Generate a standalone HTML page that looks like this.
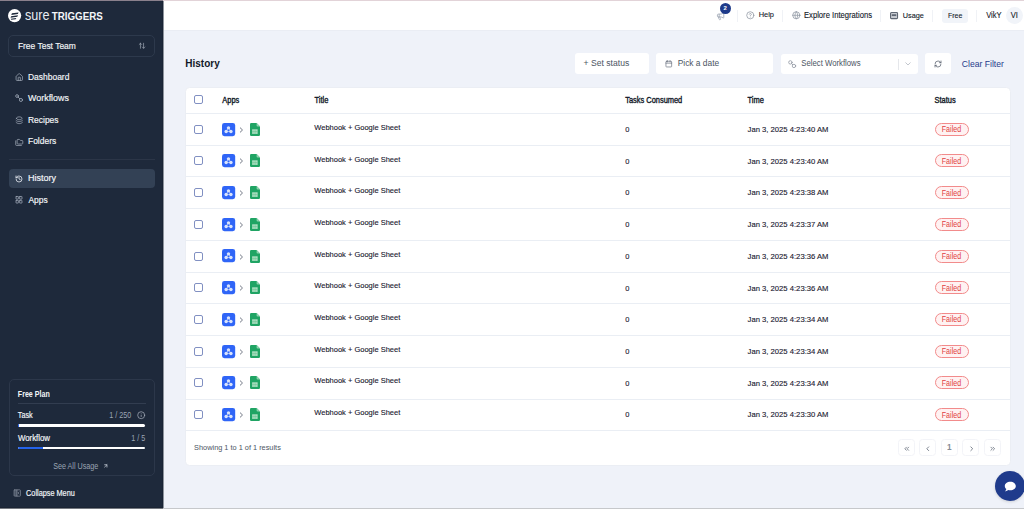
<!DOCTYPE html>
<html><head><meta charset="utf-8">
<style>
*{box-sizing:border-box;margin:0;padding:0}
html,body{width:1024px;height:509px;overflow:hidden;background:#eff2f9;font-family:"Liberation Sans",sans-serif;position:relative}
.a{position:absolute}
.t{position:absolute;white-space:nowrap;line-height:1;transform-origin:0 0}
.nav{color:#f3f5f8;font-size:8.46px;-webkit-text-stroke:0.15px #f3f5f8}
.ic{position:absolute;overflow:visible}
.sl{fill:none;stroke-linecap:round;stroke-linejoin:round}
.hr{position:absolute;left:185.5px;width:824.5px;height:1px;background:#eaeef4}
.cb{position:absolute;width:9px;height:9px;border:1.1px solid #8190c2;border-radius:2px;background:#fff}
.th{font-size:7px;font-weight:700;color:#111827}
.td{font-size:7.5px;color:#1f2937}
.fail{position:absolute;width:34px;height:13px;border:1px solid #f28b8b;background:#fff2f2;border-radius:7px}
.box{position:absolute;background:#fff;border-radius:3px}
.pg{position:absolute;width:17px;height:17px;border:1px solid #f3f4f8;border-radius:3.5px}
.sep{position:absolute;width:1px;background:#eceff4}
</style></head><body>
<div class="a" style="left:0;top:1px;width:163px;height:507px;background:#1e293b"></div>
<div class="a" style="left:162px;top:1px;width:1px;height:507px;background:#1a2435"></div>
<div class="a" style="left:163px;top:1px;width:1px;height:507px;background:#8d939c"></div>
<div class="a" style="left:164px;top:1px;width:860px;height:29px;background:#fff"></div>
<div class="a" style="left:164px;top:30px;width:860px;height:1px;background:#eaedf4"></div>
<div class="a" style="left:0;top:0;width:1024px;height:1px;background:#e2d3d8"></div>
<div class="a" style="left:0;top:0;width:163px;height:1px;background:#8a808c"></div>
<svg class="ic" style="left:8.3px;top:8.8px;" width="13.2" height="13.2" viewBox="0 0 14 14"><circle cx="7" cy="7" r="7" fill="#fff"/><path d="M4.2 4.6 L11.2 3.6 L10.5 5.3 L3.5 6.3 Z M3.3 7.6 L10.6 6.6 L9.9 8.3 L2.7 9.3 Z" fill="#1e293b"/><path d="M3 10.3 L8.8 9.5 L8.2 10.9 L3.4 11.5Z" fill="#1e293b"/></svg>
<div class="t" style="left:25px;top:8.9px;font-size:12.6px;color:#e9edf2;font-weight:400;transform:scale(1.0,1.1);">sure</div>
<div class="t" style="left:51.7px;top:10.9px;font-size:9.8px;color:#f4f6f9;font-weight:700;transform:scale(1.0,1.18);">TRIGGERS</div>
<div class="a" style="left:8px;top:35px;width:147px;height:21.5px;border:1px solid #2d394c;border-radius:5px"></div>
<div class="t nav" style="left:17.9px;top:40.8px;font-size:8.46px;color:#f3f5f8;font-weight:400;transform:scale(1.0,1.13);">Free Test Team</div>
<svg class="ic" style="left:137.5px;top:42px;" width="8" height="7.5" viewBox="0 0 24 24"><g class="sl" stroke="#aeb6c2" stroke-width="2.0"><path d="M3 8l4-4 4 4"/><path d="M7 4v16"/><path d="M21 16l-4 4-4-4"/><path d="M17 20V4"/></g></svg>
<svg class="ic" style="left:15.2px;top:72.5px;" width="8.5" height="8.5" viewBox="0 0 24 24"><g class="sl" stroke="#9aa3b2" stroke-width="2.2"><path d="M15 21v-8a1 1 0 0 0-1-1h-4a1 1 0 0 0-1 1v8"/><path d="M3 10a2 2 0 0 1 .709-1.528l7-5.999a2 2 0 0 1 2.582 0l7 5.999A2 2 0 0 1 21 10v9a2 2 0 0 1-2 2H5a2 2 0 0 1-2-2z"/></g></svg>
<svg class="ic" style="left:15.3px;top:94.2px;" width="8.5" height="8.5" viewBox="0 0 24 24"><g class="sl" stroke="#9aa3b2" stroke-width="2.4"><circle cx="5.8" cy="5.8" r="3.9"/><circle cx="16.8" cy="16.8" r="4.4"/><path d="M8.6 8.6l4.9 4.9"/></g></svg>
<svg class="ic" style="left:15.3px;top:115.8px;" width="8.5" height="8.5" viewBox="0 0 24 24"><g class="sl" stroke="#9aa3b2" stroke-width="2.3"><path d="M4 6.5C4 4 8 2.5 12 2.5s8 1.5 8 4-4 4-8 4-8-1.5-8-4z"/><path d="M3 12.5c2 2 5 3 9 3s7-1 9-3"/><path d="M3 18c2 2 5 3.5 9 3.5s7-1.5 9-3.5"/></g></svg>
<svg class="ic" style="left:15px;top:137.5px;" width="8.5" height="8.5" viewBox="0 0 24 24"><g class="sl" stroke="#9aa3b2" stroke-width="2.2"><path d="M20 17a2 2 0 0 0 2-2V9a2 2 0 0 0-2-2h-3.9a2 2 0 0 1-1.69-.9l-.81-1.2a2 2 0 0 0-1.67-.9H8a2 2 0 0 0-2 2v9a2 2 0 0 0 2 2Z"/><path d="M2 8v11a2 2 0 0 0 2 2h14"/></g></svg>
<div class="t nav" style="left:28px;top:71.6px;font-size:8.46px;color:#f3f5f8;font-weight:400;transform:scale(1.0,1.13);">Dashboard</div>
<div class="t nav" style="left:28px;top:93.1px;font-size:8.46px;color:#f3f5f8;font-weight:400;transform:scale(1.055,1.13);">Workflows</div>
<div class="t nav" style="left:28px;top:114.6px;font-size:8.46px;color:#f3f5f8;font-weight:400;transform:scale(1.0,1.13);">Recipes</div>
<div class="t nav" style="left:28px;top:136.1px;font-size:8.46px;color:#f3f5f8;font-weight:400;transform:scale(1.0,1.13);">Folders</div>
<div class="a" style="left:9px;top:159px;width:146px;height:1px;background:#2b3547"></div>
<div class="a" style="left:9px;top:169px;width:146px;height:19px;background:#334155;border-radius:4px"></div>
<svg class="ic" style="left:15.3px;top:174.5px;" width="8" height="8" viewBox="0 0 24 24"><g class="sl" stroke="#e8ecf2" stroke-width="2.4"><path d="M3 12a9 9 0 1 0 9-9 9.75 9.75 0 0 0-6.74 2.74L3 8"/><path d="M3 3v5h5"/><path d="M12 7v5l4 2"/></g></svg>
<div class="t nav" style="left:28.4px;top:173.3px;font-size:8.46px;color:#f6f8fb;font-weight:400;transform:scale(1.07,1.13);">History</div>
<svg class="ic" style="left:15.3px;top:196.3px;" width="8" height="7.5" viewBox="0 0 24 24"><g class="sl" stroke="#9aa3b2" stroke-width="2.6"><rect width="7.5" height="8.5" x="2.5" y="1.5" rx="0.8"/><rect width="7.5" height="8.5" x="14" y="1.5" rx="0.8"/><rect width="7.5" height="8.5" x="14" y="14" rx="0.8"/><rect width="7.5" height="8.5" x="2.5" y="14" rx="0.8"/></g></svg>
<div class="t nav" style="left:28.4px;top:195.0px;font-size:8.46px;color:#f3f5f8;font-weight:400;transform:scale(1.0,1.13);">Apps</div>
<div class="a" style="left:8.7px;top:379px;width:146px;height:97px;border:1px solid #2c374a;border-radius:5px"></div>
<div class="t" style="left:17.8px;top:390.5px;font-size:7.1px;color:#f3f5f8;font-weight:700;transform:scale(1.0,1.2);">Free Plan</div>
<div class="a" style="left:17.8px;top:403px;width:128px;height:1px;background:#323d50"></div>
<div class="t" style="left:17.8px;top:410.9px;font-size:7.2px;color:#f3f5f8;font-weight:400;transform:scale(1.0,1.15);-webkit-text-stroke:0.15px #f3f5f8">Task</div>
<div class="t" style="left:109.2px;top:410.9px;font-size:7.2px;color:#9aa4b3;font-weight:400;transform:scale(1.0,1.15);">1 / 250</div>
<svg class="ic" style="left:136.7px;top:410.8px;" width="8.4" height="8.4" viewBox="0 0 24 24"><g class="sl" stroke="#aab2bf" stroke-width="2"><circle cx="12" cy="12" r="10"/><path d="M12 16v-4"/><path d="M12 8h.01"/></g></svg>
<div class="a" style="left:17.8px;top:424px;width:127.7px;height:2.5px;background:#fff;border-radius:1.5px"></div>
<div class="a" style="left:17.8px;top:424px;width:1.5px;height:2.5px;background:#2563eb;border-radius:1.5px"></div>
<div class="t" style="left:17.9px;top:434.6px;font-size:7.85px;color:#f3f5f8;font-weight:400;transform:scale(1.0,1.06);-webkit-text-stroke:0.15px #f3f5f8">Workflow</div>
<div class="t" style="left:131.2px;top:434.2px;font-size:7.2px;color:#9aa4b3;font-weight:400;transform:scale(1.0,1.15);">1 / 5</div>
<div class="a" style="left:17.8px;top:446.5px;width:127.7px;height:2.5px;background:#fff;border-radius:1.5px"></div>
<div class="a" style="left:17.8px;top:446.5px;width:25.6px;height:2.5px;background:#2563eb;border-radius:1.5px 0 0 1.5px"></div>
<div class="t" style="left:53.2px;top:461.9px;font-size:7.2px;color:#9aa4b3;font-weight:400;transform:scale(1.0,1.15);">See All Usage</div>
<svg class="ic" style="left:103.4px;top:463.2px;" width="5.6" height="5.8" viewBox="0 0 24 24"><g class="sl" stroke="#c0c7d1" stroke-width="3.4"><path d="M7 7h10v10"/><path d="M7 17 17 7"/></g></svg>
<svg class="ic" style="left:12.9px;top:489.4px;" width="8.5" height="8" viewBox="0 0 24 24"><rect width="9" height="18" x="3" y="3" fill="#4b5566"/><g class="sl" stroke="#7d8696" stroke-width="2.4"><rect width="19" height="19" x="2.5" y="2.5" rx="2"/><path d="M11 3v18"/><path d="m17 15-3-3 3-3"/></g></svg>
<div class="t" style="left:26.1px;top:488.7px;font-size:7.3px;color:#f3f5f8;font-weight:400;transform:scale(1.0,1.15);-webkit-text-stroke:0.15px #f3f5f8">Collapse Menu</div>
<svg class="ic" style="left:715.5px;top:11.8px;" width="9.2" height="8.5" viewBox="0 0 24 24"><g class="sl" stroke="#9ea6b4" stroke-width="2.3"><path d="M11 6a13 13 0 0 0 8.4-2.8A1 1 0 0 1 21 4v12a1 1 0 0 1-1.6.8A13 13 0 0 0 11 14H5a2 2 0 0 1-2-2V8a2 2 0 0 1 2-2z"/><path d="M6 14a12 12 0 0 0 2.4 7.2 2 2 0 0 0 3.2-2.4A8 8 0 0 1 10 14"/><path d="M8 6v8"/></g></svg>
<div class="a" style="left:720px;top:3px;width:11px;height:11px;border-radius:50%;background:#1e3a8a"></div>
<div class="t" style="left:723.6px;top:5.3px;font-size:6px;color:#fff;font-weight:700;">2</div>
<div class="a" style="left:737px;top:9.5px;width:1px;height:12px;background:#f0f2f6"></div>
<svg class="ic" style="left:745.8px;top:11.2px;" width="8.6" height="8.6" viewBox="0 0 24 24"><g class="sl" stroke="#8d95a2" stroke-width="2.1"><circle cx="12" cy="12" r="10"/><path d="M9.09 9a3 3 0 0 1 5.83 1c0 2-3 3-3 3"/><path d="M12 17h.01"/></g></svg>
<div class="t" style="left:758.7px;top:11px;font-size:7.45px;color:#111827;font-weight:400;transform:scale(1.0,1.08);-webkit-text-stroke:0.1px #111827">Help</div>
<div class="a" style="left:782px;top:9.5px;width:1px;height:12px;background:#f0f2f6"></div>
<svg class="ic" style="left:791.6px;top:11px;" width="8.6" height="8.6" viewBox="0 0 24 24"><g class="sl" stroke="#8d95a2" stroke-width="2.1"><circle cx="12" cy="12" r="10"/><path d="M12 2a14.5 14.5 0 0 0 0 20 14.5 14.5 0 0 0 0-20"/><path d="M2 12h20"/></g></svg>
<div class="t" style="left:804px;top:11.6px;font-size:7.65px;color:#111827;font-weight:400;transform:scale(1.0,1.08);-webkit-text-stroke:0.1px #111827">Explore Integrations</div>
<div class="a" style="left:880px;top:9.5px;width:1px;height:12px;background:#f0f2f6"></div>
<svg class="ic" style="left:889.8px;top:12px;" width="8.1" height="7.2" viewBox="0 0 27 24"><rect x="1.8" y="1.8" width="23.4" height="20.4" rx="3" fill="#c9ccd2" stroke="#5f6673" stroke-width="3.6"/><rect x="6" y="7.5" width="15" height="6" fill="#5f6673"/></svg>
<div class="t" style="left:902.8px;top:11.8px;font-size:7.3px;color:#111827;font-weight:400;transform:scale(1.0,1.08);-webkit-text-stroke:0.1px #111827">Usage</div>
<div class="a" style="left:932px;top:9.5px;width:1px;height:12px;background:#f0f2f6"></div>
<div class="a" style="left:942px;top:8.5px;width:26px;height:14px;background:#f1f4f9;border-radius:3px"></div>
<div class="t" style="left:948px;top:11.8px;font-size:7.0px;color:#111827;font-weight:400;transform:scale(1.0,1.08);-webkit-text-stroke:0.1px #111827">Free</div>
<div class="a" style="left:976px;top:9.5px;width:1px;height:12px;background:#f0f2f6"></div>
<div class="t" style="left:986.2px;top:11.8px;font-size:7.6px;color:#111827;font-weight:400;transform:scale(1.0,1.08);-webkit-text-stroke:0.1px #111827">VikY</div>
<div class="a" style="left:1006px;top:7px;width:17px;height:17px;border-radius:50%;background:#f1f4f9"></div>
<div class="t" style="left:1010.8px;top:11.8px;font-size:7.6px;color:#111827;font-weight:400;transform:scale(1.0,1.08);-webkit-text-stroke:0.1px #111827">VI</div>
<div class="t" style="left:185.3px;top:58.0px;font-size:10px;color:#111827;font-weight:700;transform:scale(1.0,1.08);">History</div>
<div class="box" style="left:574.5px;top:53px;width:74px;height:20.5px"></div>
<div class="t" style="left:583.6px;top:59.0px;font-size:8.6px;color:#4b5563;font-weight:400;transform:scale(1.0,1.05);">+ Set status</div>
<div class="box" style="left:656px;top:53px;width:117px;height:20.5px"></div>
<svg class="ic" style="left:665.3px;top:60.0px;" width="7.6" height="7.6" viewBox="0 0 24 24"><g class="sl" stroke="#6b7280" stroke-width="2.2"><path d="M8 2v4"/><path d="M16 2v4"/><rect width="18" height="18" x="3" y="4" rx="2"/><path d="M3 10h18"/></g></svg>
<div class="t" style="left:677.7px;top:59.0px;font-size:8.4px;color:#4b5563;font-weight:400;transform:scale(1.0,1.05);">Pick a date</div>
<div class="box" style="left:780.5px;top:53.5px;width:137px;height:20.5px"></div>
<svg class="ic" style="left:787.6px;top:59.8px;" width="8.2" height="8.2" viewBox="0 0 24 24"><g class="sl" stroke="#8b929e" stroke-width="2.2"><circle cx="7" cy="7" r="5"/><circle cx="17.5" cy="17.5" r="5"/><path d="M10.5 10.5l3.5 3.5"/></g></svg>
<div class="t" style="left:801.3px;top:60.3px;font-size:7.75px;color:#4b5563;font-weight:400;transform:scale(1.0,1.05);">Select Workflows</div>
<div class="a" style="left:897.5px;top:58.5px;width:1px;height:11px;background:#e5e7eb"></div>
<svg class="ic" style="left:905px;top:61.8px;" width="6" height="4" viewBox="0 0 24 16"><path d="m3 3 9 9 9-9" fill="none" stroke="#a3a9b3" stroke-width="2.6" stroke-linecap="round"/></svg>
<div class="box" style="left:925px;top:53px;width:26px;height:20.5px"></div>
<svg class="ic" style="left:934px;top:59.7px;" width="8" height="8" viewBox="0 0 24 24"><g class="sl" stroke="#555d6b" stroke-width="2.2"><path d="M3 12a9 9 0 0 1 9-9 9.75 9.75 0 0 1 6.74 2.74L21 8"/><path d="M21 3v5h-5"/><path d="M21 12a9 9 0 0 1-9 9 9.75 9.75 0 0 1-6.74-2.74L3 16"/><path d="M8 16H3v5"/></g></svg>
<div class="t" style="left:961.8px;top:59.5px;font-size:8.6px;color:#1e3a8a;font-weight:400;transform:scale(1.0,1.05);">Clear Filter</div>
<div class="a" style="left:184.5px;top:87px;width:826px;height:378.5px;background:#fff;border:1px solid #ebeef4;border-radius:4.5px"></div>
<div class="cb" style="left:194.2px;top:95px"></div>
<div class="t" style="left:222.3px;top:96.2px;font-size:7.45px;color:#111827;font-weight:400;transform:scale(1.0,1.1);-webkit-text-stroke:0.32px #111827">Apps</div>
<div class="t" style="left:314.5px;top:96.2px;font-size:7.45px;color:#111827;font-weight:400;transform:scale(1.0,1.1);-webkit-text-stroke:0.32px #111827">Title</div>
<div class="t" style="left:625.2px;top:96.2px;font-size:7.45px;color:#111827;font-weight:400;transform:scale(1.0,1.1);-webkit-text-stroke:0.32px #111827">Tasks Consumed</div>
<div class="t" style="left:747.6px;top:96.2px;font-size:7.45px;color:#111827;font-weight:400;transform:scale(1.0,1.1);-webkit-text-stroke:0.32px #111827">Time</div>
<div class="t" style="left:934.6px;top:96.2px;font-size:7.45px;color:#111827;font-weight:400;transform:scale(1.0,1.1);-webkit-text-stroke:0.32px #111827">Status</div>
<div class="hr" style="top:113px"></div>
<div class="hr" style="top:145px"></div>
<div class="hr" style="top:176px"></div>
<div class="hr" style="top:208px"></div>
<div class="hr" style="top:240px"></div>
<div class="hr" style="top:272px"></div>
<div class="hr" style="top:303px"></div>
<div class="hr" style="top:335px"></div>
<div class="hr" style="top:367px"></div>
<div class="hr" style="top:399px"></div>
<div class="hr" style="top:430px"></div>
<div class="cb" style="left:194.2px;top:124.7px"></div>
<svg class="ic" style="left:222.3px;top:122.6px;" width="13.2" height="13.2" viewBox="0 0 13 13"><rect width="13" height="13" rx="2.4" fill="#2f65f7"/><path d="M6.4 4.8 L4.1 8.4 H8.8 Z" fill="none" stroke="#c9d6fa" stroke-width="0.7"/><g fill="#d9e3fb"><circle cx="6.4" cy="4.8" r="1.65"/><circle cx="4.1" cy="8.4" r="1.7"/><circle cx="8.8" cy="8.4" r="1.7"/></g></svg>
<svg class="ic" style="left:239.2px;top:126.7px;" width="5" height="6" viewBox="0 0 5 6"><path d="M1 0.6 L3.5 3 L1 5.4" fill="none" stroke="#6b7280" stroke-width="0.95"/></svg>
<svg class="ic" style="left:250px;top:122.7px;" width="10" height="13" viewBox="0 0 10 13"><path d="M1.2 0 H6.6 L10 3.4 V11.8 Q10 13 8.8 13 H1.2 Q0 13 0 11.8 V1.2 Q0 0 1.2 0Z" fill="#20a464"/><path d="M6.6 0 L10 3.4 H7.6 Q6.6 3.4 6.6 2.4Z" fill="#8fd3ae"/><rect x="2.2" y="6.3" width="5.4" height="4.6" fill="#b7e3c9"/><path d="M4.0 6.3 V10.9 M5.8 6.3 V10.9 M2.2 8.6 H7.6" stroke="#5fbf8b" stroke-width="0.5"/></svg>
<div class="t" style="left:314.3px;top:123.8px;font-size:7.5px;color:#1a2030;font-weight:400;transform:scale(1.0,1.05);-webkit-text-stroke:0.12px #1a2030">Webhook + Google Sheet</div>
<div class="t" style="left:625.2px;top:126.0px;font-size:7.5px;color:#1a2030;font-weight:400;transform:scale(1.0,1.05);-webkit-text-stroke:0.12px #1a2030">0</div>
<div class="t" style="left:747.6px;top:126.0px;font-size:7.67px;color:#1a2030;font-weight:400;transform:scale(1.0,1.05);-webkit-text-stroke:0.12px #1a2030">Jan 3, 2025 4:23:40 AM</div>
<div class="fail" style="left:934.5px;top:122.7px"></div>
<div class="t" style="left:941.8px;top:126.2px;font-size:7.09px;color:#e03e3e;font-weight:400;transform:scale(1.0,1.16);">Failed</div>
<div class="cb" style="left:194.2px;top:156.4px"></div>
<svg class="ic" style="left:222.3px;top:154.3px;" width="13.2" height="13.2" viewBox="0 0 13 13"><rect width="13" height="13" rx="2.4" fill="#2f65f7"/><path d="M6.4 4.8 L4.1 8.4 H8.8 Z" fill="none" stroke="#c9d6fa" stroke-width="0.7"/><g fill="#d9e3fb"><circle cx="6.4" cy="4.8" r="1.65"/><circle cx="4.1" cy="8.4" r="1.7"/><circle cx="8.8" cy="8.4" r="1.7"/></g></svg>
<svg class="ic" style="left:239.2px;top:158.4px;" width="5" height="6" viewBox="0 0 5 6"><path d="M1 0.6 L3.5 3 L1 5.4" fill="none" stroke="#6b7280" stroke-width="0.95"/></svg>
<svg class="ic" style="left:250px;top:154.4px;" width="10" height="13" viewBox="0 0 10 13"><path d="M1.2 0 H6.6 L10 3.4 V11.8 Q10 13 8.8 13 H1.2 Q0 13 0 11.8 V1.2 Q0 0 1.2 0Z" fill="#20a464"/><path d="M6.6 0 L10 3.4 H7.6 Q6.6 3.4 6.6 2.4Z" fill="#8fd3ae"/><rect x="2.2" y="6.3" width="5.4" height="4.6" fill="#b7e3c9"/><path d="M4.0 6.3 V10.9 M5.8 6.3 V10.9 M2.2 8.6 H7.6" stroke="#5fbf8b" stroke-width="0.5"/></svg>
<div class="t" style="left:314.3px;top:155.5px;font-size:7.5px;color:#1a2030;font-weight:400;transform:scale(1.0,1.05);-webkit-text-stroke:0.12px #1a2030">Webhook + Google Sheet</div>
<div class="t" style="left:625.2px;top:157.7px;font-size:7.5px;color:#1a2030;font-weight:400;transform:scale(1.0,1.05);-webkit-text-stroke:0.12px #1a2030">0</div>
<div class="t" style="left:747.6px;top:157.7px;font-size:7.67px;color:#1a2030;font-weight:400;transform:scale(1.0,1.05);-webkit-text-stroke:0.12px #1a2030">Jan 3, 2025 4:23:40 AM</div>
<div class="fail" style="left:934.5px;top:154.4px"></div>
<div class="t" style="left:941.8px;top:157.9px;font-size:7.09px;color:#e03e3e;font-weight:400;transform:scale(1.0,1.16);">Failed</div>
<div class="cb" style="left:194.2px;top:188.1px"></div>
<svg class="ic" style="left:222.3px;top:186.0px;" width="13.2" height="13.2" viewBox="0 0 13 13"><rect width="13" height="13" rx="2.4" fill="#2f65f7"/><path d="M6.4 4.8 L4.1 8.4 H8.8 Z" fill="none" stroke="#c9d6fa" stroke-width="0.7"/><g fill="#d9e3fb"><circle cx="6.4" cy="4.8" r="1.65"/><circle cx="4.1" cy="8.4" r="1.7"/><circle cx="8.8" cy="8.4" r="1.7"/></g></svg>
<svg class="ic" style="left:239.2px;top:190.1px;" width="5" height="6" viewBox="0 0 5 6"><path d="M1 0.6 L3.5 3 L1 5.4" fill="none" stroke="#6b7280" stroke-width="0.95"/></svg>
<svg class="ic" style="left:250px;top:186.1px;" width="10" height="13" viewBox="0 0 10 13"><path d="M1.2 0 H6.6 L10 3.4 V11.8 Q10 13 8.8 13 H1.2 Q0 13 0 11.8 V1.2 Q0 0 1.2 0Z" fill="#20a464"/><path d="M6.6 0 L10 3.4 H7.6 Q6.6 3.4 6.6 2.4Z" fill="#8fd3ae"/><rect x="2.2" y="6.3" width="5.4" height="4.6" fill="#b7e3c9"/><path d="M4.0 6.3 V10.9 M5.8 6.3 V10.9 M2.2 8.6 H7.6" stroke="#5fbf8b" stroke-width="0.5"/></svg>
<div class="t" style="left:314.3px;top:187.2px;font-size:7.5px;color:#1a2030;font-weight:400;transform:scale(1.0,1.05);-webkit-text-stroke:0.12px #1a2030">Webhook + Google Sheet</div>
<div class="t" style="left:625.2px;top:189.4px;font-size:7.5px;color:#1a2030;font-weight:400;transform:scale(1.0,1.05);-webkit-text-stroke:0.12px #1a2030">0</div>
<div class="t" style="left:747.6px;top:189.4px;font-size:7.67px;color:#1a2030;font-weight:400;transform:scale(1.0,1.05);-webkit-text-stroke:0.12px #1a2030">Jan 3, 2025 4:23:38 AM</div>
<div class="fail" style="left:934.5px;top:186.1px"></div>
<div class="t" style="left:941.8px;top:189.6px;font-size:7.09px;color:#e03e3e;font-weight:400;transform:scale(1.0,1.16);">Failed</div>
<div class="cb" style="left:194.2px;top:219.8px"></div>
<svg class="ic" style="left:222.3px;top:217.7px;" width="13.2" height="13.2" viewBox="0 0 13 13"><rect width="13" height="13" rx="2.4" fill="#2f65f7"/><path d="M6.4 4.8 L4.1 8.4 H8.8 Z" fill="none" stroke="#c9d6fa" stroke-width="0.7"/><g fill="#d9e3fb"><circle cx="6.4" cy="4.8" r="1.65"/><circle cx="4.1" cy="8.4" r="1.7"/><circle cx="8.8" cy="8.4" r="1.7"/></g></svg>
<svg class="ic" style="left:239.2px;top:221.8px;" width="5" height="6" viewBox="0 0 5 6"><path d="M1 0.6 L3.5 3 L1 5.4" fill="none" stroke="#6b7280" stroke-width="0.95"/></svg>
<svg class="ic" style="left:250px;top:217.8px;" width="10" height="13" viewBox="0 0 10 13"><path d="M1.2 0 H6.6 L10 3.4 V11.8 Q10 13 8.8 13 H1.2 Q0 13 0 11.8 V1.2 Q0 0 1.2 0Z" fill="#20a464"/><path d="M6.6 0 L10 3.4 H7.6 Q6.6 3.4 6.6 2.4Z" fill="#8fd3ae"/><rect x="2.2" y="6.3" width="5.4" height="4.6" fill="#b7e3c9"/><path d="M4.0 6.3 V10.9 M5.8 6.3 V10.9 M2.2 8.6 H7.6" stroke="#5fbf8b" stroke-width="0.5"/></svg>
<div class="t" style="left:314.3px;top:218.9px;font-size:7.5px;color:#1a2030;font-weight:400;transform:scale(1.0,1.05);-webkit-text-stroke:0.12px #1a2030">Webhook + Google Sheet</div>
<div class="t" style="left:625.2px;top:221.1px;font-size:7.5px;color:#1a2030;font-weight:400;transform:scale(1.0,1.05);-webkit-text-stroke:0.12px #1a2030">0</div>
<div class="t" style="left:747.6px;top:221.1px;font-size:7.67px;color:#1a2030;font-weight:400;transform:scale(1.0,1.05);-webkit-text-stroke:0.12px #1a2030">Jan 3, 2025 4:23:37 AM</div>
<div class="fail" style="left:934.5px;top:217.8px"></div>
<div class="t" style="left:941.8px;top:221.3px;font-size:7.09px;color:#e03e3e;font-weight:400;transform:scale(1.0,1.16);">Failed</div>
<div class="cb" style="left:194.2px;top:251.5px"></div>
<svg class="ic" style="left:222.3px;top:249.4px;" width="13.2" height="13.2" viewBox="0 0 13 13"><rect width="13" height="13" rx="2.4" fill="#2f65f7"/><path d="M6.4 4.8 L4.1 8.4 H8.8 Z" fill="none" stroke="#c9d6fa" stroke-width="0.7"/><g fill="#d9e3fb"><circle cx="6.4" cy="4.8" r="1.65"/><circle cx="4.1" cy="8.4" r="1.7"/><circle cx="8.8" cy="8.4" r="1.7"/></g></svg>
<svg class="ic" style="left:239.2px;top:253.5px;" width="5" height="6" viewBox="0 0 5 6"><path d="M1 0.6 L3.5 3 L1 5.4" fill="none" stroke="#6b7280" stroke-width="0.95"/></svg>
<svg class="ic" style="left:250px;top:249.5px;" width="10" height="13" viewBox="0 0 10 13"><path d="M1.2 0 H6.6 L10 3.4 V11.8 Q10 13 8.8 13 H1.2 Q0 13 0 11.8 V1.2 Q0 0 1.2 0Z" fill="#20a464"/><path d="M6.6 0 L10 3.4 H7.6 Q6.6 3.4 6.6 2.4Z" fill="#8fd3ae"/><rect x="2.2" y="6.3" width="5.4" height="4.6" fill="#b7e3c9"/><path d="M4.0 6.3 V10.9 M5.8 6.3 V10.9 M2.2 8.6 H7.6" stroke="#5fbf8b" stroke-width="0.5"/></svg>
<div class="t" style="left:314.3px;top:250.6px;font-size:7.5px;color:#1a2030;font-weight:400;transform:scale(1.0,1.05);-webkit-text-stroke:0.12px #1a2030">Webhook + Google Sheet</div>
<div class="t" style="left:625.2px;top:252.8px;font-size:7.5px;color:#1a2030;font-weight:400;transform:scale(1.0,1.05);-webkit-text-stroke:0.12px #1a2030">0</div>
<div class="t" style="left:747.6px;top:252.8px;font-size:7.67px;color:#1a2030;font-weight:400;transform:scale(1.0,1.05);-webkit-text-stroke:0.12px #1a2030">Jan 3, 2025 4:23:36 AM</div>
<div class="fail" style="left:934.5px;top:249.5px"></div>
<div class="t" style="left:941.8px;top:253.0px;font-size:7.09px;color:#e03e3e;font-weight:400;transform:scale(1.0,1.16);">Failed</div>
<div class="cb" style="left:194.2px;top:283.2px"></div>
<svg class="ic" style="left:222.3px;top:281.1px;" width="13.2" height="13.2" viewBox="0 0 13 13"><rect width="13" height="13" rx="2.4" fill="#2f65f7"/><path d="M6.4 4.8 L4.1 8.4 H8.8 Z" fill="none" stroke="#c9d6fa" stroke-width="0.7"/><g fill="#d9e3fb"><circle cx="6.4" cy="4.8" r="1.65"/><circle cx="4.1" cy="8.4" r="1.7"/><circle cx="8.8" cy="8.4" r="1.7"/></g></svg>
<svg class="ic" style="left:239.2px;top:285.2px;" width="5" height="6" viewBox="0 0 5 6"><path d="M1 0.6 L3.5 3 L1 5.4" fill="none" stroke="#6b7280" stroke-width="0.95"/></svg>
<svg class="ic" style="left:250px;top:281.2px;" width="10" height="13" viewBox="0 0 10 13"><path d="M1.2 0 H6.6 L10 3.4 V11.8 Q10 13 8.8 13 H1.2 Q0 13 0 11.8 V1.2 Q0 0 1.2 0Z" fill="#20a464"/><path d="M6.6 0 L10 3.4 H7.6 Q6.6 3.4 6.6 2.4Z" fill="#8fd3ae"/><rect x="2.2" y="6.3" width="5.4" height="4.6" fill="#b7e3c9"/><path d="M4.0 6.3 V10.9 M5.8 6.3 V10.9 M2.2 8.6 H7.6" stroke="#5fbf8b" stroke-width="0.5"/></svg>
<div class="t" style="left:314.3px;top:282.3px;font-size:7.5px;color:#1a2030;font-weight:400;transform:scale(1.0,1.05);-webkit-text-stroke:0.12px #1a2030">Webhook + Google Sheet</div>
<div class="t" style="left:625.2px;top:284.5px;font-size:7.5px;color:#1a2030;font-weight:400;transform:scale(1.0,1.05);-webkit-text-stroke:0.12px #1a2030">0</div>
<div class="t" style="left:747.6px;top:284.5px;font-size:7.67px;color:#1a2030;font-weight:400;transform:scale(1.0,1.05);-webkit-text-stroke:0.12px #1a2030">Jan 3, 2025 4:23:36 AM</div>
<div class="fail" style="left:934.5px;top:281.2px"></div>
<div class="t" style="left:941.8px;top:284.7px;font-size:7.09px;color:#e03e3e;font-weight:400;transform:scale(1.0,1.16);">Failed</div>
<div class="cb" style="left:194.2px;top:314.9px"></div>
<svg class="ic" style="left:222.3px;top:312.8px;" width="13.2" height="13.2" viewBox="0 0 13 13"><rect width="13" height="13" rx="2.4" fill="#2f65f7"/><path d="M6.4 4.8 L4.1 8.4 H8.8 Z" fill="none" stroke="#c9d6fa" stroke-width="0.7"/><g fill="#d9e3fb"><circle cx="6.4" cy="4.8" r="1.65"/><circle cx="4.1" cy="8.4" r="1.7"/><circle cx="8.8" cy="8.4" r="1.7"/></g></svg>
<svg class="ic" style="left:239.2px;top:316.9px;" width="5" height="6" viewBox="0 0 5 6"><path d="M1 0.6 L3.5 3 L1 5.4" fill="none" stroke="#6b7280" stroke-width="0.95"/></svg>
<svg class="ic" style="left:250px;top:312.9px;" width="10" height="13" viewBox="0 0 10 13"><path d="M1.2 0 H6.6 L10 3.4 V11.8 Q10 13 8.8 13 H1.2 Q0 13 0 11.8 V1.2 Q0 0 1.2 0Z" fill="#20a464"/><path d="M6.6 0 L10 3.4 H7.6 Q6.6 3.4 6.6 2.4Z" fill="#8fd3ae"/><rect x="2.2" y="6.3" width="5.4" height="4.6" fill="#b7e3c9"/><path d="M4.0 6.3 V10.9 M5.8 6.3 V10.9 M2.2 8.6 H7.6" stroke="#5fbf8b" stroke-width="0.5"/></svg>
<div class="t" style="left:314.3px;top:314.0px;font-size:7.5px;color:#1a2030;font-weight:400;transform:scale(1.0,1.05);-webkit-text-stroke:0.12px #1a2030">Webhook + Google Sheet</div>
<div class="t" style="left:625.2px;top:316.2px;font-size:7.5px;color:#1a2030;font-weight:400;transform:scale(1.0,1.05);-webkit-text-stroke:0.12px #1a2030">0</div>
<div class="t" style="left:747.6px;top:316.2px;font-size:7.67px;color:#1a2030;font-weight:400;transform:scale(1.0,1.05);-webkit-text-stroke:0.12px #1a2030">Jan 3, 2025 4:23:34 AM</div>
<div class="fail" style="left:934.5px;top:312.9px"></div>
<div class="t" style="left:941.8px;top:316.4px;font-size:7.09px;color:#e03e3e;font-weight:400;transform:scale(1.0,1.16);">Failed</div>
<div class="cb" style="left:194.2px;top:346.6px"></div>
<svg class="ic" style="left:222.3px;top:344.5px;" width="13.2" height="13.2" viewBox="0 0 13 13"><rect width="13" height="13" rx="2.4" fill="#2f65f7"/><path d="M6.4 4.8 L4.1 8.4 H8.8 Z" fill="none" stroke="#c9d6fa" stroke-width="0.7"/><g fill="#d9e3fb"><circle cx="6.4" cy="4.8" r="1.65"/><circle cx="4.1" cy="8.4" r="1.7"/><circle cx="8.8" cy="8.4" r="1.7"/></g></svg>
<svg class="ic" style="left:239.2px;top:348.6px;" width="5" height="6" viewBox="0 0 5 6"><path d="M1 0.6 L3.5 3 L1 5.4" fill="none" stroke="#6b7280" stroke-width="0.95"/></svg>
<svg class="ic" style="left:250px;top:344.6px;" width="10" height="13" viewBox="0 0 10 13"><path d="M1.2 0 H6.6 L10 3.4 V11.8 Q10 13 8.8 13 H1.2 Q0 13 0 11.8 V1.2 Q0 0 1.2 0Z" fill="#20a464"/><path d="M6.6 0 L10 3.4 H7.6 Q6.6 3.4 6.6 2.4Z" fill="#8fd3ae"/><rect x="2.2" y="6.3" width="5.4" height="4.6" fill="#b7e3c9"/><path d="M4.0 6.3 V10.9 M5.8 6.3 V10.9 M2.2 8.6 H7.6" stroke="#5fbf8b" stroke-width="0.5"/></svg>
<div class="t" style="left:314.3px;top:345.7px;font-size:7.5px;color:#1a2030;font-weight:400;transform:scale(1.0,1.05);-webkit-text-stroke:0.12px #1a2030">Webhook + Google Sheet</div>
<div class="t" style="left:625.2px;top:347.9px;font-size:7.5px;color:#1a2030;font-weight:400;transform:scale(1.0,1.05);-webkit-text-stroke:0.12px #1a2030">0</div>
<div class="t" style="left:747.6px;top:347.9px;font-size:7.67px;color:#1a2030;font-weight:400;transform:scale(1.0,1.05);-webkit-text-stroke:0.12px #1a2030">Jan 3, 2025 4:23:34 AM</div>
<div class="fail" style="left:934.5px;top:344.6px"></div>
<div class="t" style="left:941.8px;top:348.1px;font-size:7.09px;color:#e03e3e;font-weight:400;transform:scale(1.0,1.16);">Failed</div>
<div class="cb" style="left:194.2px;top:378.3px"></div>
<svg class="ic" style="left:222.3px;top:376.2px;" width="13.2" height="13.2" viewBox="0 0 13 13"><rect width="13" height="13" rx="2.4" fill="#2f65f7"/><path d="M6.4 4.8 L4.1 8.4 H8.8 Z" fill="none" stroke="#c9d6fa" stroke-width="0.7"/><g fill="#d9e3fb"><circle cx="6.4" cy="4.8" r="1.65"/><circle cx="4.1" cy="8.4" r="1.7"/><circle cx="8.8" cy="8.4" r="1.7"/></g></svg>
<svg class="ic" style="left:239.2px;top:380.3px;" width="5" height="6" viewBox="0 0 5 6"><path d="M1 0.6 L3.5 3 L1 5.4" fill="none" stroke="#6b7280" stroke-width="0.95"/></svg>
<svg class="ic" style="left:250px;top:376.3px;" width="10" height="13" viewBox="0 0 10 13"><path d="M1.2 0 H6.6 L10 3.4 V11.8 Q10 13 8.8 13 H1.2 Q0 13 0 11.8 V1.2 Q0 0 1.2 0Z" fill="#20a464"/><path d="M6.6 0 L10 3.4 H7.6 Q6.6 3.4 6.6 2.4Z" fill="#8fd3ae"/><rect x="2.2" y="6.3" width="5.4" height="4.6" fill="#b7e3c9"/><path d="M4.0 6.3 V10.9 M5.8 6.3 V10.9 M2.2 8.6 H7.6" stroke="#5fbf8b" stroke-width="0.5"/></svg>
<div class="t" style="left:314.3px;top:377.4px;font-size:7.5px;color:#1a2030;font-weight:400;transform:scale(1.0,1.05);-webkit-text-stroke:0.12px #1a2030">Webhook + Google Sheet</div>
<div class="t" style="left:625.2px;top:379.6px;font-size:7.5px;color:#1a2030;font-weight:400;transform:scale(1.0,1.05);-webkit-text-stroke:0.12px #1a2030">0</div>
<div class="t" style="left:747.6px;top:379.6px;font-size:7.67px;color:#1a2030;font-weight:400;transform:scale(1.0,1.05);-webkit-text-stroke:0.12px #1a2030">Jan 3, 2025 4:23:34 AM</div>
<div class="fail" style="left:934.5px;top:376.3px"></div>
<div class="t" style="left:941.8px;top:379.8px;font-size:7.09px;color:#e03e3e;font-weight:400;transform:scale(1.0,1.16);">Failed</div>
<div class="cb" style="left:194.2px;top:410.0px"></div>
<svg class="ic" style="left:222.3px;top:407.9px;" width="13.2" height="13.2" viewBox="0 0 13 13"><rect width="13" height="13" rx="2.4" fill="#2f65f7"/><path d="M6.4 4.8 L4.1 8.4 H8.8 Z" fill="none" stroke="#c9d6fa" stroke-width="0.7"/><g fill="#d9e3fb"><circle cx="6.4" cy="4.8" r="1.65"/><circle cx="4.1" cy="8.4" r="1.7"/><circle cx="8.8" cy="8.4" r="1.7"/></g></svg>
<svg class="ic" style="left:239.2px;top:412.0px;" width="5" height="6" viewBox="0 0 5 6"><path d="M1 0.6 L3.5 3 L1 5.4" fill="none" stroke="#6b7280" stroke-width="0.95"/></svg>
<svg class="ic" style="left:250px;top:408.0px;" width="10" height="13" viewBox="0 0 10 13"><path d="M1.2 0 H6.6 L10 3.4 V11.8 Q10 13 8.8 13 H1.2 Q0 13 0 11.8 V1.2 Q0 0 1.2 0Z" fill="#20a464"/><path d="M6.6 0 L10 3.4 H7.6 Q6.6 3.4 6.6 2.4Z" fill="#8fd3ae"/><rect x="2.2" y="6.3" width="5.4" height="4.6" fill="#b7e3c9"/><path d="M4.0 6.3 V10.9 M5.8 6.3 V10.9 M2.2 8.6 H7.6" stroke="#5fbf8b" stroke-width="0.5"/></svg>
<div class="t" style="left:314.3px;top:409.1px;font-size:7.5px;color:#1a2030;font-weight:400;transform:scale(1.0,1.05);-webkit-text-stroke:0.12px #1a2030">Webhook + Google Sheet</div>
<div class="t" style="left:625.2px;top:411.3px;font-size:7.5px;color:#1a2030;font-weight:400;transform:scale(1.0,1.05);-webkit-text-stroke:0.12px #1a2030">0</div>
<div class="t" style="left:747.6px;top:411.3px;font-size:7.67px;color:#1a2030;font-weight:400;transform:scale(1.0,1.05);-webkit-text-stroke:0.12px #1a2030">Jan 3, 2025 4:23:30 AM</div>
<div class="fail" style="left:934.5px;top:408.0px"></div>
<div class="t" style="left:941.8px;top:411.5px;font-size:7.09px;color:#e03e3e;font-weight:400;transform:scale(1.0,1.16);">Failed</div>
<div class="t" style="left:194.1px;top:444.3px;font-size:7.36px;color:#4b5563;font-weight:400;transform:scale(1.0,1.05);">Showing 1 to 1 of 1 results</div>
<div class="pg" style="left:897.6px;top:439.4px"></div>
<div class="pg" style="left:919.3px;top:439.4px"></div>
<div class="pg" style="left:940.6px;top:439.4px"></div>
<div class="pg" style="left:962.4px;top:439.4px"></div>
<div class="pg" style="left:984.3px;top:439.4px"></div>
<svg class="ic" style="left:902.8px;top:444.8px;" width="7.5" height="7.5" viewBox="0 0 24 24"><g class="sl" stroke="#7c838f" stroke-width="3"><path d="m11 17-5-5 5-5"/><path d="m18 17-5-5 5-5"/></g></svg>
<svg class="ic" style="left:924.2px;top:444.8px;" width="7.5" height="7.5" viewBox="0 0 24 24"><g class="sl" stroke="#7c838f" stroke-width="3.2"><path d="m15 18-6-6 6-6"/></g></svg>
<div class="t" style="left:947.0px;top:444.0px;font-size:8.2px;color:#868c96;font-weight:700;transform:scale(1.0,1.08);">1</div>
<svg class="ic" style="left:967.5px;top:444.8px;" width="7.5" height="7.5" viewBox="0 0 24 24"><g class="sl" stroke="#7c838f" stroke-width="3.2"><path d="m9 18 6-6-6-6"/></g></svg>
<svg class="ic" style="left:989.3px;top:444.8px;" width="7.5" height="7.5" viewBox="0 0 24 24"><g class="sl" stroke="#7c838f" stroke-width="3"><path d="m6 17 5-5-5-5"/><path d="m13 17 5-5-5-5"/></g></svg>
<div class="a" style="left:995px;top:471px;width:30px;height:30px;border-radius:50%;background:#1f3b8c;box-shadow:0 1px 3px rgba(0,0,0,0.15)"></div>
<svg class="ic" style="left:1003.7px;top:481px;" width="12.6" height="10.8" viewBox="0 0 24 20"><path d="M12 1C5.9 1 1.5 4.6 1.5 9.2c0 2.3 1.1 4.3 3 5.8L2.2 19.5l6.4-2.4c1.1.3 2.2.4 3.4.4 6.1 0 10.5-3.6 10.5-8.2S18.1 1 12 1z" fill="#fff"/></svg>
<div class="a" style="left:0;top:508px;width:1024px;height:1px;background:#c6c8cb"></div>
<div class="a" style="left:0;top:508px;width:163px;height:1px;background:#74787f"></div>
<div class="a" style="left:0;top:507px;width:163px;height:1px;background:#1b2434"></div>
</body></html>
